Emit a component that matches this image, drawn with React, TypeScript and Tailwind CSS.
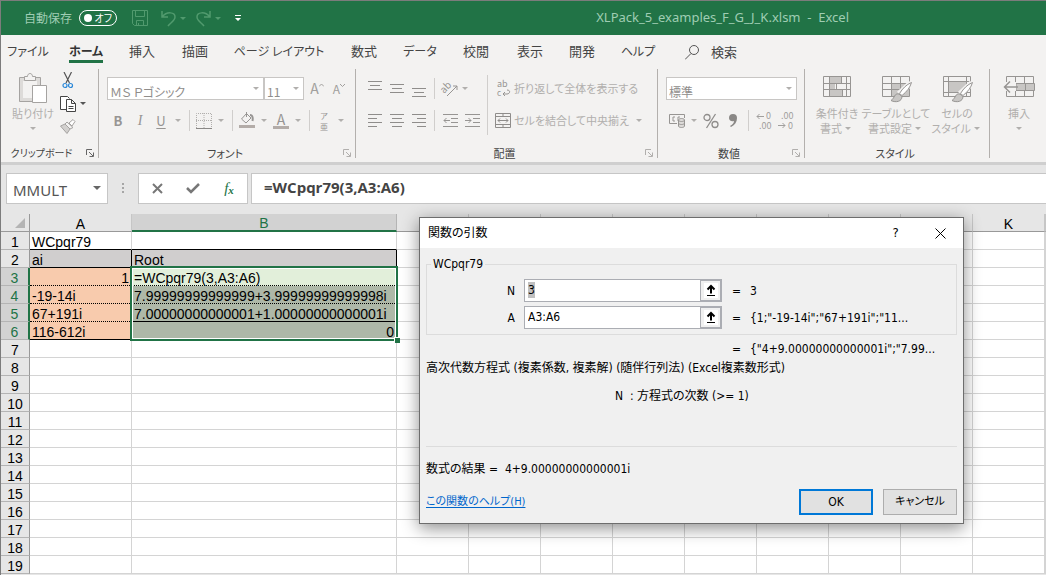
import { useEffect, useRef, type ReactNode } from "react";
import clsx from "clsx";

const tabs = [
  { label: "ファイル", width: "w-[54px] text-[12px]" },
  { label: "ホーム", width: "w-[62px] text-[12px]", active: true },
  { label: "挿入", width: "w-[50px] text-[13px]" },
  { label: "描画", width: "w-[56px] text-[13px]" },
  { label: "ページ レイアウト", width: "w-[112px] text-[12px]" },
  { label: "数式", width: "w-[58px] text-[13px]" },
  { label: "データ", width: "w-[54px] text-[12px]" },
  { label: "校閲", width: "w-[58px] text-[13px]" },
  { label: "表示", width: "w-[50px] text-[13px]" },
  { label: "開発", width: "w-[54px] text-[13px]" },
  { label: "ヘルプ", width: "w-[58px] text-[12px]" },
];

const columns = ["A", "B", "C", "D", "E", "F", "G", "H", "I", "J", "K", "L"];
const rows = Array.from({ length: 19 }, (_, i) => i + 1);

const cells: Record<string, string> = {
  A1: "WCpqr79",
  A2: "ai",
  B2: "Root",
  A3: "1",
  B3: "=WCpqr79(3,A3:A6)",
  A4: "-19-14i",
  B4: "7.99999999999999+3.99999999999998i",
  A5: "67+191i",
  B5: "7.00000000000001+1.00000000000001i",
  A6: "116-612i",
  B6: "0",
};

const cellStyles: Record<string, string> = {
  A1: "border-r-[#d4d4d4] border-b-black",
  B1: "border-r-[#d4d4d4] border-b-black",
  A2: "bg-[#d0cece] border-black",
  B2: "bg-[#d0cece] border-black",
  A3: "bg-[#f8cbad] border-b-black [border-bottom-style:dotted] text-right",
  A4: "bg-[#f8cbad] border-b-black [border-bottom-style:dotted]",
  A5: "bg-[#f8cbad] border-b-black [border-bottom-style:dotted]",
  A6: "bg-[#f8cbad] border-b-black",
  B3: "relative bg-[#e2efda] border-b-black [border-bottom-style:dotted]",
  B4: "bg-[#aeb8a8] border-b-black [border-bottom-style:dotted]",
  B5: "bg-[#aeb8a8] border-b-black",
  B6: "bg-[#aeb8a8] border-b-black text-right",
};

function Caret({ width = "w-[14px]", dark = false }: { width?: string; dark?: boolean }) {
  return (
    <span className={clsx("flex shrink-0 items-center justify-center", width)}>
      <svg width="6" height="3" viewBox="0 0 6 3" className={dark ? "fill-[#555]" : "fill-[#b1afad]"}>
        <path d="M0 0h6L3 3z" />
      </svg>
    </span>
  );
}

function Tool({ label, width = "w-[22px]", children }: { label: string; width?: string; children: ReactNode }) {
  return (
    <button type="button" aria-label={label} className={clsx("flex h-[23px] shrink-0 items-center justify-center", width)}>
      {children}
    </button>
  );
}

function Separator() {
  return <span className="mx-1 h-[21px] w-px shrink-0 bg-[#d0cecc]" />;
}

function Lines({ rows: lines, top = 0 }: { rows: [number, number][]; top?: number }) {
  return (
    <svg width="14" height="18" viewBox="0 0 14 18" stroke="#8f8d8b">
      {lines.map(([x, w], i) => (
        <path key={i} d={`M${x} ${top + i * 4 + 0.5}h${w}`} />
      ))}
    </svg>
  );
}

function Group({
  label,
  width,
  launcher = true,
  active = false,
  children,
}: {
  label: string;
  width: string;
  launcher?: boolean;
  active?: boolean;
  children: ReactNode;
}) {
  return (
    <section className={clsx("flex shrink-0 flex-col border-r border-[#b3b0ad]", width)}>
      <div className="h-[78px] shrink-0">{children}</div>
      <div className="flex h-[11px] items-center pr-1">
        <span
          className={clsx(
            "flex-1 text-center leading-4 whitespace-nowrap text-[#444]",
            active ? "text-[10px]" : "text-[11px]",
            launcher && "-mr-2",
            active && "pr-3",
          )}
        >
          {label}
        </span>
        {launcher && (
          <button type="button" aria-label={`${label}の設定`} className="flex w-2 items-center">
            <svg width="8" height="8" viewBox="0 0 8 8" fill="none" stroke={active ? "#666" : "#b1afad"}>
              <path d="M.5 6V.5H6M3 3l4 4M7.500 3.500v4h-4" />
            </svg>
          </button>
        )}
      </div>
    </section>
  );
}

function Combo({ label, value, width }: { label: string; value: string; width: string }) {
  return (
    <div className={clsx("relative h-[23px] border border-[#c8c6c4] bg-white", width)}>
      <select
        aria-label={label}
        className="h-full w-full appearance-none bg-transparent px-0.5 pb-[3px] text-[12px] leading-[18px] text-[#8f8d8b] outline-none"
      >
        <option>{value}</option>
      </select>
      <span className="pointer-events-none absolute inset-y-0 right-0 flex">
        <Caret />
      </span>
    </div>
  );
}

function GridArt({ kind }: { kind: "conditional" | "table" | "cell" | "insert" }) {
  const brush = kind === "table" || kind === "cell";
  return (
    <svg width="32" height="28" viewBox="0 0 32 28" fill="none" stroke="#979593">
      {kind === "conditional" && (
        <>
          <path d="M8 1h12v7H8zM8 8h6v6H8zM8 14h13v7H8z" fill="#c8c6c4" stroke="none" />
          <path d="M2.500 1.500h27v20h-27zM2.500 8.500h27M2.500 14.500h27M8.500 1.500v20M20.500 1.500v7M15.500 8.500v6M21.500 14.500v7M25.500 1.500v20" />
        </>
      )}
      {kind === "table" && (
        <>
          <path d="M12 8h18v13H12z" fill="#c8c6c4" stroke="none" />
          <path d="M2.500 1.500h27v20h-27zM2.500 8.500h27M2.500 14.500h27M11.500 1.500v20M20.500 1.500v20" />
        </>
      )}
      {kind === "cell" && (
        <>
          <path d="M7 6h18v11H7z" fill="#c8c6c4" stroke="none" />
          <path d="M2.500 1.500h27v20h-27zM2.500 6.500h27M2.500 17.500h27M7.500 1.500v20M25.500 1.500v20" />
        </>
      )}
      {kind === "insert" && (
        <>
          <path d="M3.500 1.500h27v20h-27zM3.500 8.500h27M3.500 15.500h27M12.500 1.500v20M21.500 1.500v20" />
          <path d="M13 8.500h18.500v7H13z" fill="#c8c6c4" />
          <path d="M22.500 8.500v7" />
          <path d="M1 7h12v9H1z" fill="#f3f2f1" stroke="none" />
          <path d="M15 12H1M7 6.500 1.500 12 7 17.500" strokeWidth="1.500" />
        </>
      )}
      {brush && (
        <>
          <path d="M31 8 19 19" stroke="#f3f2f1" strokeWidth="6" />
          <path d="M31.500 7.500c-5 2-9 6-12 11l2.500 2c5-4 8-8 9.500-13z" fill="#fff" />
          <path d="M19 19c-5-1-4 4-8 6.500 5 2.500 11 1 11-4z" fill="#c8c6c4" />
        </>
      )}
    </svg>
  );
}

function BigButton({ kind, lines, width }: { kind: "conditional" | "table" | "cell" | "insert"; lines: string[]; width: string }) {
  return (
    <button type="button" className={clsx("flex shrink-0 flex-col items-center pt-1.5 text-[11px] leading-[15px] whitespace-nowrap text-[#b1afad]", width)}>
      <GridArt kind={kind} />
      <span className="mt-[3px]">{lines[0]}</span>
      <span className="flex h-[15px] items-center">
        {lines[1]}
        <Caret width="w-3" />
      </span>
    </button>
  );
}

function TitleBar() {
  return (
    <header className="flex h-[34px] items-center bg-[#217346] text-[12px] text-[#9fcdb3]">
      <div className="flex flex-1 items-center pl-[23px]">
        <label htmlFor="autosave">自動保存</label>
        <button
          id="autosave"
          type="button"
          role="switch"
          aria-checked="false"
          className="ml-[7px] flex h-4 w-[38px] items-center justify-between rounded-full border border-white px-1 text-[10px] leading-3 text-white"
        >
          <span className="h-2 w-2 rounded-full bg-white" />
          <span>オフ</span>
        </button>
        <button type="button" aria-label="上書き保存" className="ml-[15px]">
          <svg width="16" height="16" viewBox="0 0 16 16" fill="none" stroke="#519a6e">
            <path d="M.5.500h15v15H2.500l-2-2zM3.500.500v6h9v-6M4.500 15.500v-5h7v5M6.500 15v-2" />
          </svg>
        </button>
        <button type="button" aria-label="元に戻す" className="ml-[13px] flex items-center">
          <svg width="15" height="17" viewBox="0 0 15 17" fill="none" stroke="#519a6e" strokeWidth="1.500">
            <path d="M1 1v6h6M1 7c5-6 13-5 13 0 0 4-5 6-7 9" />
          </svg>
          <svg width="6" height="3" viewBox="0 0 6 3" className="ml-1 fill-[#519a6e]"><path d="M0 0h6L3 3z" /></svg>
        </button>
        <button type="button" aria-label="やり直し" className="ml-[10px] flex items-center">
          <svg width="15" height="17" viewBox="0 0 15 17" fill="none" stroke="#519a6e" strokeWidth="1.500">
            <path d="M14 1v6H8M14 7C9 1 1 2 1 7c0 4 5 6 7 9" />
          </svg>
          <svg width="6" height="3" viewBox="0 0 6 3" className="ml-1 fill-[#519a6e]"><path d="M0 0h6L3 3z" /></svg>
        </button>
        <button type="button" aria-label="クイック アクセス ツール バーのカスタマイズ" className="ml-[14px]">
          <svg width="6" height="7" viewBox="0 0 6 7" fill="#fff"><path d="M0 0h6v1H0zM0 3h6L3 6z" /></svg>
        </button>
      </div>
      <h1 className="pr-[197px] font-['Noto_Sans',sans-serif] text-[13px] whitespace-pre">XLPack_5_examples_F_G_J_K.xlsm  -  Excel</h1>
    </header>
  );
}

function Tabs() {
  return (
    <nav className="flex h-[34px] items-center text-[#444]">
      {tabs.map(({ label, width, active }) => (
        <button key={label} type="button" className={clsx("flex h-full shrink-0 flex-col items-center pt-1.5 whitespace-nowrap", width)}>
          <span
            className={clsx(
              "border-b-3 leading-[19px]",
              active ? "border-[#217346] font-bold text-[#333]" : "border-transparent",
            )}
          >
            {label}
          </span>
        </button>
      ))}
      <button type="button" className="flex items-center gap-3 pl-[18px] text-[13px]">
        <svg width="14" height="15" viewBox="0 0 14 15" fill="none" stroke="#555">
          <circle cx="9" cy="5" r="4.500" />
          <path d="M6 8.500 0 14.500" />
        </svg>
        検索
      </button>
    </nav>
  );
}

function ClipboardGroup() {
  return (
    <Group label="クリップボード" width="w-[98px]" active>
      <div className="flex">
        <button type="button" className="flex w-[56px] flex-col items-center pt-1 pl-2 text-[11px] leading-[15px] whitespace-nowrap text-[#b1afad]">
          <svg width="28" height="30" viewBox="0 0 28 30" fill="none" stroke="#a5a3a1">
            <path d="M.5 4.500h21v24H.5z" fill="#dddbd9" />
            <path d="M4 8h14v17H4z" fill="#f3f2f1" stroke="none" />
            <path d="M5.500 7.500v-4h3c0-4 5-4 5 0h3v4z" fill="#f3f2f1" />
            <path d="M13.500 12.500h14v17h-14z" fill="#fff" />
          </svg>
          <span className="mt-[3px]">貼り付け</span>
          <span className="mt-1.5"><Caret /></span>
        </button>
        <div className="flex flex-col">
          <Tool label="切り取り">
            <svg width="12" height="17" viewBox="0 0 12 17" fill="none" strokeWidth="1.200">
              <path d="M2 0 7.500 11M9.500 0 4 11" stroke="#555" />
              <circle cx="3" cy="13.500" r="2" stroke="#2b88d8" />
              <circle cx="8.500" cy="13.500" r="2" stroke="#2b88d8" />
            </svg>
          </Tool>
          <div className="flex">
            <Tool label="コピー">
              <svg width="16" height="16" viewBox="0 0 16 16" fill="#fff" stroke="#444">
                <path d="M6.500 13.500h-6V.500h7l2 2" />
                <path d="M6.500 3.500h5l4 4v8h-9zM11.500 3.500v4h4M8.500 10.500h5M8.500 12.500h5" />
              </svg>
            </Tool>
            <Caret width="w-2" dark />
          </div>
          <Tool label="書式のコピー/貼り付け">
            <svg width="16" height="15" viewBox="0 0 16 15" fill="#d2d0ce" stroke="#a5a3a1">
              <path d="M.5 7 5 5l5 5-3 4.500z" />
              <path d="m5 5 2-2 6 5.500-3 1.500z" fill="#f3f2f1" />
              <path d="m9 4 4-3.500 2 2L12 7z" fill="#fff" />
            </svg>
          </Tool>
        </div>
      </div>
    </Group>
  );
}

function FontGroup() {
  return (
    <Group label="フォント" width="w-[257px]">
      <div className="flex flex-col gap-[9px] pt-2 pl-2">
        <div className="flex">
          <Combo label="フォント名" value="ＭＳ Ｐゴシック" width="w-[157px]" />
          <Combo label="フォント サイズ" value="11" width="w-[40px]" />
          <div className="flex pl-0.5 text-[14px] text-[#a19f9d]">
            <Tool label="フォント サイズの拡大">
              A
              <svg width="5" height="12" viewBox="0 0 5 12" fill="none" stroke="#a19f9d"><path d="M0 3.500 2.500 1 5 3.500" /></svg>
            </Tool>
            <Tool label="フォント サイズの縮小">
              <span className="text-[12px]">A</span>
              <svg width="5" height="12" viewBox="0 0 5 12" fill="none" stroke="#a19f9d"><path d="M0 1l2.500 2.500L5 1" /></svg>
            </Tool>
          </div>
        </div>
        <div className="flex items-center text-[13px] text-[#979593]">
          <Tool label="太字"><b>B</b></Tool>
          <Tool label="斜体"><i className="font-['Liberation_Serif',serif] text-[14px]">I</i></Tool>
          <Tool label="下線" width="w-5"><u className="underline-offset-2">U</u></Tool>
          <Caret />
          <Separator />
          <Tool label="罫線" width="w-5">
            <svg width="16" height="16" viewBox="0 0 16 16" fill="none" stroke="#b1afad">
              <path d="M.5 15V.500h15V15M8 0v15M0 7.500h16" strokeDasharray="1 1" />
              <path d="M0 15.500h16" stroke="#8a8886" />
            </svg>
          </Tool>
          <Caret />
          <Separator />
          <Tool label="塗りつぶしの色" width="w-5">
            <svg width="16" height="17" viewBox="0 0 16 17" fill="none" stroke="#979593">
              <path d="M0 13h16v3H0z" fill="#b3aca8" stroke="none" />
              <path d="m7.500 1.500 4.500 4.500-5 5-4.500-4zM7.500 0v5" />
              <path d="M11 3c3 0 3 4 2.500 6" strokeWidth="2" />
            </svg>
          </Tool>
          <Caret />
          <Tool label="フォントの色" width="w-5">
            <span className="w-4 border-b-3 border-[#b3aca8] text-center text-[14px] leading-[14px]">A</span>
          </Tool>
          <Caret />
          <Separator />
          <Tool label="ふりがな" width="w-5">
            <span className="flex flex-col text-[8px] leading-[11px]">
              <span>ア</span>
              <span>亜</span>
            </span>
          </Tool>
          <Caret />
        </div>
      </div>
    </Group>
  );
}

function AlignmentGroup() {
  return (
    <Group label="配置" width="w-[302px]">
      <div className="flex pl-2">
        <div className="flex flex-col gap-[9px] pt-2">
          <div className="flex items-center">
            <Tool label="上揃え"><Lines rows={[[0, 14], [2, 10], [0, 14]]} top={1} /></Tool>
            <Tool label="上下中央揃え"><Lines rows={[[0, 14], [2, 10], [0, 14]]} top={4} /></Tool>
            <Tool label="下揃え"><Lines rows={[[0, 14], [2, 10], [0, 14]]} top={8} /></Tool>
            <Separator />
            <Tool label="方向">
              <svg width="18" height="18" viewBox="0 0 18 18" fill="none" stroke="#979593" className="overflow-visible">
                <text x="0" y="11" fontSize="10" fill="#979593" stroke="none" transform="rotate(-45 5 9)">ab</text>
                <path d="M6 16 16 6M12 6h4v4" />
              </svg>
            </Tool>
            <Caret width="w-2" />
          </div>
          <div className="flex items-center">
            <Tool label="左揃え"><Lines rows={[[0, 14], [0, 9], [0, 14], [0, 9]]} top={2} /></Tool>
            <Tool label="中央揃え"><Lines rows={[[0, 14], [2, 10], [0, 14], [2, 10]]} top={2} /></Tool>
            <Tool label="右揃え"><Lines rows={[[0, 14], [5, 9], [0, 14], [5, 9]]} top={2} /></Tool>
            <Separator />
            <Tool label="インデントを減らす">
              <svg width="15" height="14" viewBox="0 0 15 14" fill="none" stroke="#979593">
                <path d="M0 .500h15M8 4.500h7M8 8.500h7M0 12.500h15M7 6.500H1M3.500 4 1 6.500 3.500 9" />
              </svg>
            </Tool>
            <Tool label="インデントを増やす">
              <svg width="15" height="14" viewBox="0 0 15 14" fill="none" stroke="#979593">
                <path d="M0 .500h15M8 4.500h7M8 8.500h7M0 12.500h15M0 6.500h6M3.500 4 6 6.500 3.500 9" />
              </svg>
            </Tool>
          </div>
        </div>
        <span className="mx-1 mt-1.5 h-[60px] w-px bg-[#d0cecc]" />
        <div className="flex flex-col gap-[9px] pt-2 text-[11px] whitespace-nowrap text-[#b1afad]">
          <button type="button" className="flex h-[23px] items-center">
            <span className="flex w-[22px] justify-center">
              <svg width="15" height="19" viewBox="0 0 15 19" fill="none" stroke="#979593" className="overflow-visible">
                <text x="1" y="8" fontSize="9" fill="#979593" stroke="none">ab</text>
                <text x="1" y="17" fontSize="8" fill="#979593" stroke="none">c</text>
                <path d="M11 11c4 0 3 4 0 4H7M9 13l-2 2 2 2" />
              </svg>
            </span>
            折り返して全体を表示する
          </button>
          <button type="button" className="flex h-[23px] items-center">
            <span className="flex w-[22px] justify-center">
              <svg width="16" height="15" viewBox="0 0 16 15" fill="none" stroke="#8f8d8b">
                <path d="M.5.500h15v14H.5zM.5 3.500h15M.5 11.500h15M8 .500v3M8 11.500v3M3 7.500h10M5 5.500l-2 2 2 2M11 5.500l2 2-2 2" />
              </svg>
            </span>
            セルを結合して中央揃え
            <Caret width="w-5" />
          </button>
        </div>
      </div>
    </Group>
  );
}

function NumberGroup() {
  return (
    <Group label="数値" width="w-[147px]">
      <div className="flex flex-col gap-[9px] pt-2 pl-2">
        <Combo label="表示形式" value="標準" width="w-[131px]" />
        <div className="flex items-center text-[#979593]">
          <Tool label="通貨表示形式">
            <svg width="17" height="14" viewBox="0 0 17 14" fill="none" stroke="#979593">
              <path d="M8 9.500H.5v-9h15V4M6 3H4v4h2M11 3H9v4" />
              <path d="M9.500 6v6c0 2 6 2 6 0V6c0-2-6-2-6 0s6 2 6 0M9.500 9c0 2 6 2 6 0" fill="#dddbd9" />
            </svg>
          </Tool>
          <Caret width="w-3" />
          <Tool label="パーセント スタイル">
            <svg width="16" height="16" viewBox="0 0 16 16" fill="none" stroke="#8f8d8b" strokeWidth="1.300">
              <circle cx="4" cy="4.500" r="3" />
              <circle cx="12" cy="11.500" r="3" />
              <path d="M12.500 1 3.500 15" />
            </svg>
          </Tool>
          <Tool label="桁区切りスタイル">
            <svg width="8" height="13" viewBox="0 0 8 13" fill="#8a8886"><path d="M4 0a4 4 0 0 1 4 4c0 4-2 7-6 9l-1-1c3-2 4-3 4-5C2 8 0 6 0 4a4 4 0 0 1 4-4z" /></svg>
          </Tool>
          <Separator />
          <Tool label="小数点以下の表示桁数を増やす">
            <svg width="16" height="18" viewBox="0 0 16 18" fill="#a19f9d" fontSize="9" className="overflow-visible">
              <path d="M1 4.500h7M3.500 2 1 4.500 3.500 7" fill="none" stroke="#a19f9d" />
              <text x="10" y="7">0</text>
              <text x="3" y="17">.00</text>
            </svg>
          </Tool>
          <Tool label="小数点以下の表示桁数を減らす">
            <svg width="16" height="18" viewBox="0 0 16 18" fill="#a19f9d" fontSize="9" className="overflow-visible">
              <text x="3" y="7">.00</text>
              <path d="M0 13.500h7M4.500 11 7 13.500 4.500 16" fill="none" stroke="#a19f9d" />
              <text x="10" y="17">0</text>
            </svg>
          </Tool>
        </div>
      </div>
    </Group>
  );
}

function Ribbon() {
  return (
    <div className="flex h-24 overflow-hidden border-b-3 border-[#cfcfcf]">
      <div className="flex h-[89px] min-w-0 flex-1">
        <ClipboardGroup />
        <FontGroup />
        <AlignmentGroup />
        <NumberGroup />
        <Group label="スタイル" width="w-[185px]" launcher={false}>
          <div className="flex pl-2">
            <BigButton kind="conditional" lines={["条件付き", "書式"]} width="w-[48px]" />
            <BigButton kind="table" lines={["テーブルとして", "書式設定"]} width="w-[70px]" />
            <BigButton kind="cell" lines={["セルの", "スタイル"]} width="w-[52px]" />
          </div>
        </Group>
        <BigButton kind="insert" lines={["挿入", ""]} width="w-[58px]" />
      </div>
    </div>
  );
}

function FormulaBar() {
  return (
    <div className="flex h-[49px] items-start pt-2 pl-[5px]">
      <div className="flex h-[31px] w-[102px] shrink-0 items-center border border-[#c6c6c6] bg-white">
        <input
          aria-label="名前ボックス"
          defaultValue="MMULT"
          className="w-full min-w-0 pt-1 pl-1.5 font-['Noto_Sans','Noto_Sans_CJK_JP',sans-serif] text-[15px] text-[#555] outline-none"
        />
        <button type="button" aria-label="名前の一覧" className="flex w-5 shrink-0 justify-center">
          <svg width="8" height="5" viewBox="0 0 8 5" fill="#666"><path d="M0 0h8L4 4z" /></svg>
        </button>
      </div>
      <span className="flex h-[31px] w-[30px] shrink-0 items-center justify-center">
        <svg width="2" height="11" viewBox="0 0 2 11" fill="#a6a6a6"><path d="M0 0h2v2H0zM0 4h2v2H0zM0 8h2v2H0z" /></svg>
      </span>
      <div className="flex h-[31px] w-[110px] shrink-0 items-center border border-[#c6c6c6] bg-white">
        <button type="button" aria-label="キャンセル" className="flex w-9 justify-center">
          <svg width="11" height="11" viewBox="0 0 11 11" fill="none" stroke="#777" strokeWidth="2"><path d="m1 1 9 9M10 1l-9 9" /></svg>
        </button>
        <button type="button" aria-label="入力" className="flex w-9 justify-center">
          <svg width="14" height="11" viewBox="0 0 14 11" fill="none" stroke="#777" strokeWidth="2.500"><path d="m1 5 4 4 8-8" /></svg>
        </button>
        <button
          type="button"
          aria-label="関数の挿入"
          className="flex w-9 justify-center font-['Liberation_Serif',serif] text-[15px] leading-4 text-[#217346] italic"
        >
          f<span className="pt-0.5 text-[11px] font-bold">x</span>
        </button>
      </div>
      <input
        aria-label="数式バー"
        defaultValue="=WCpqr79(3,A3:A6)"
        className="ml-[3px] h-[31px] min-w-0 flex-1 border border-r-0 border-[#c6c6c6] bg-white pb-1 pl-3 font-['Open_Sans','Noto_Sans_CJK_JP',sans-serif] text-[15px] font-bold text-[#444] outline-none"
      />
    </div>
  );
}

function Sheet() {
  return (
    <table className="w-full table-fixed border-separate border-spacing-0 bg-white font-['Liberation_Sans',sans-serif] text-[14px] leading-[14px] text-black">
      <colgroup>
        <col className="w-[29px]" />
        <col className="w-[102px]" />
        <col className="w-[265px]" />
        {columns.slice(2, 11).map((column) => (
          <col key={column} className="w-[72px]" />
        ))}
        <col />
      </colgroup>
      <thead>
        <tr>
          <th className="h-[18px] border-r border-b border-[#999] bg-[#e6e6e6] p-0">
            <svg width="10" height="10" viewBox="0 0 10 10" className="mr-1 ml-auto fill-[#b4b4b4]"><path d="M10 0v10H0z" /></svg>
          </th>
          {columns.map((column) => (
            <th
              key={column}
              scope="col"
              className={clsx(
                "h-[18px] p-0 font-normal",
                column === "B"
                  ? "border-r border-b-2 border-r-[#b4b4b4] border-b-[#217346] bg-[#d2d2d2] pt-0.5 text-[#217346]"
                  : "border-r border-b border-r-[#c6c6c6] border-b-[#999] bg-[#e6e6e6] pt-[3px]",
              )}
            >
              {column !== "L" && column}
            </th>
          ))}
        </tr>
      </thead>
      <tbody>
        {rows.map((row) => (
          <tr key={row}>
            <th
              scope="row"
              className={clsx(
                "h-[18px] border-b p-0 pt-[3px] font-normal",
                row > 2 && row < 7
                  ? "border-r-2 border-r-[#217346] border-b-[#b4b4b4] bg-[#d2d2d2] text-[#217346]"
                  : "border-r border-r-[#999] border-b-[#b4b4b4] bg-[#e6e6e6]",
              )}
            >
              {row}
            </th>
            {columns.map((column) => {
              const id = `${column}${row}`;
              return (
                <td
                  key={id}
                  className={clsx(
                    "h-[18px] border-r border-b p-0 whitespace-nowrap",
                    cells[id] && "px-0.5 pt-[3px]",
                    cellStyles[id] ?? "border-[#d4d4d4]",
                  )}
                >
                  {cells[id]}
                  {id === "B3" && (
                    <span className="pointer-events-none absolute -top-0.5 -left-0.5 h-[75px] w-[268px] border-2 border-[#217346] inset-ring inset-ring-white">
                      <span className="absolute -right-1 -bottom-1 h-1.5 w-1.5 border-t border-l border-white bg-[#217346]" />
                    </span>
                  )}
                </td>
              );
            })}
          </tr>
        ))}
      </tbody>
    </table>
  );
}

function ArgumentRow({ name, value, result, focused = false }: { name: string; value: string; result: string; focused?: boolean }) {
  const input = useRef<HTMLInputElement>(null);

  useEffect(() => {
    if (focused) input.current?.select();
  }, [focused]);

  return (
    <div className="flex h-[23px] items-center">
      <label htmlFor={`arg-${name}`} className="w-[88px] text-right">{name}</label>
      <div className="ml-[9px] flex h-[23px] w-[198px] border border-[#abadb3] bg-white">
        <input
          ref={input}
          id={`arg-${name}`}
          defaultValue={value}
          className="min-w-0 flex-1 pb-0.5 pl-[3px] outline-none selection:bg-[#c0c0c0] selection:text-black"
        />
        <button type="button" aria-label={`${name} の範囲を選択`} className="flex w-[21px] items-center justify-center border border-[#abadb3] bg-[#f0f0f0]">
          <svg width="14" height="15" viewBox="0 0 14 15">
            <path d="M0 0h14v15H0z" fill="#fff" />
            <path d="M3 12.500h8" stroke="#000" />
            <path d="M7 10.500V4M3.500 6.500 7 3l3.500 3.500" fill="none" stroke="#000" strokeWidth="2" />
          </svg>
        </button>
      </div>
      <span className="w-7 pl-2.5">=</span>
      <output className="whitespace-nowrap">{result}</output>
    </div>
  );
}

function FunctionDialog() {
  return (
    <div
      role="dialog"
      aria-labelledby="dialog-title"
      className="absolute top-[216px] left-[418px] flex h-[307px] w-[545px] flex-col border border-[#6d6d6d] bg-[#f0f0f0] font-['DejaVu_Sans_Condensed','Noto_Sans_CJK_JP',sans-serif] text-[12px] leading-4 text-black shadow-[0_4px_16px_rgba(0,0,0,0.45)]"
    >
      <div className="flex h-[30px] items-center bg-white pl-2">
        <h2 id="dialog-title" className="flex-1">関数の引数</h2>
        <button type="button" aria-label="ヘルプ" className="w-[45px] text-center text-[13px]">?</button>
        <button type="button" aria-label="閉じる" className="flex w-[45px] justify-center">
          <svg width="11" height="11" viewBox="0 0 11 11" fill="none" stroke="#000"><path d="m.5.500 10 10M10.500.500l-10 10" /></svg>
        </button>
      </div>
      <div className="flex flex-1 flex-col px-1.5 pt-2">
        <fieldset className="h-[79px] border border-[#dcdcdc]">
          <legend className="ml-1 px-0.5">WCpqr79</legend>
          <div className="flex flex-col gap-1 pt-[7px]">
            <ArgumentRow name="N" value="3" result="3" focused />
            <ArgumentRow name="A" value="A3:A6" result={'{1;"-19-14i";"67+191i";"11...'} />
          </div>
        </fieldset>
        <p className="mt-1.5 flex pl-[306px] whitespace-nowrap">
          <span className="w-[18px]">=</span>
          {'{"4+9.00000000000001i";"7.99...'}
        </p>
        <p className="mt-[3px] whitespace-nowrap">高次代数方程式 (複素係数, 複素解) (随伴行列法) (Excel複素数形式)</p>
        <p className="mt-3 pl-[189px] whitespace-pre">N  : 方程式の次数 (&gt;= 1)</p>
        <hr className="mt-[42px] border-[#dcdcdc]" />
        <p className="mt-3.5 whitespace-pre">数式の結果 =  4+9.00000000000001i</p>
        <div className="mt-3 flex items-center">
          <a href="#help" className="flex-1 text-[11px] text-[#0066cc] underline underline-offset-2">この関数のヘルプ(H)</a>
          <button type="button" className="h-[26px] w-[74px] border-2 border-[#0078d7] bg-[#e1e1e1]">OK</button>
          <button type="button" className="ml-2.5 h-[26px] w-[74px] border border-[#adadad] bg-[#e1e1e1] text-[11px]">キャンセル</button>
        </div>
      </div>
    </div>
  );
}

export default function App() {
  return (
    <div className="relative min-h-screen overflow-hidden border-t border-l border-[#7c7c7c] bg-[#e6e6e6] font-['Noto_Sans_CJK_JP',sans-serif] [font-feature-settings:'palt']">
      <div className="bg-[#f3f2f1]">
        <TitleBar />
        <Tabs />
        <Ribbon />
      </div>
      <FormulaBar />
      <Sheet />
      <FunctionDialog />
    </div>
  );
}
